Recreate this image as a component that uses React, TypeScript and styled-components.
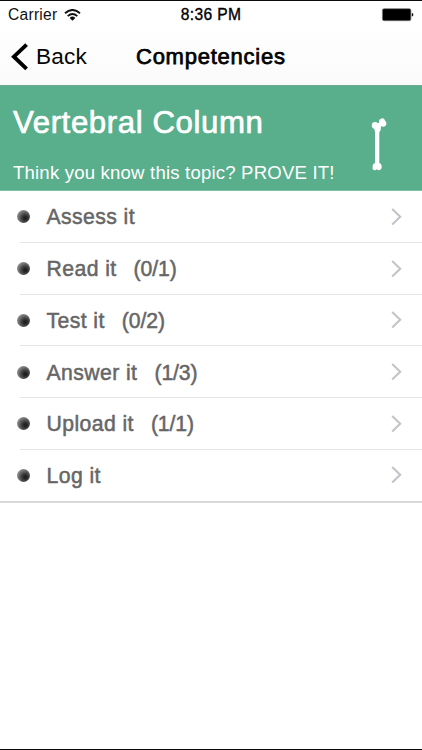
import React from "react";
import styled, { createGlobalStyle } from "styled-components";

const GlobalStyle = createGlobalStyle`
  * { box-sizing: border-box; }
  body { margin: 0; background: #fff; font-family: "Liberation Sans", Arial, sans-serif; }
`;

const Screen = styled.div`
  width: 422px;
  height: 750px;
  display: flex;
  flex-direction: column;
  overflow: hidden;
  background: #fff;
  border-top: 1px solid #0c0a0c;
  border-bottom: 1px solid #0c0a0c;
`;

const Header = styled.header`
  height: 84px;
  flex: none;
  background: linear-gradient(#fff 30%, #fafafa);
`;

const StatusBar = styled.div`
  height: 28px;
  display: grid;
  grid-template-columns: 1fr auto 1fr;
  align-items: center;
  padding: 0 8px;
  color: #111;
  font-size: 15.6px;
  line-height: 28px;
`;

const Carrier = styled.div`
  display: flex;
  align-items: center;
  gap: 7px;
  letter-spacing: 0.25px;
`;

const Clock = styled.div`
  color: #000;
  letter-spacing: 0.35px;
  -webkit-text-stroke: 0.35px #000;
`;

const Battery = styled.svg`
  justify-self: end;
`;

const NavBar = styled.div`
  height: 56px;
  display: grid;
  grid-template-columns: 136px 1fr;
  align-items: center;
  color: #050505;
`;

const BackButton = styled.div`
  display: flex;
  align-items: center;
  gap: 7px;
  padding-left: 11px;
  font-size: 22.6px;
  line-height: 28px;
  letter-spacing: 0.15px;
`;

const NavTitle = styled.h1`
  margin: 0;
  font-size: 22px;
  font-weight: 400;
  line-height: 28px;
  letter-spacing: 0.75px;
  -webkit-text-stroke: 0.75px #000;
`;

const Banner = styled.section`
  height: 106px;
  flex: none;
  display: flex;
  justify-content: space-between;
  padding: 0 34px 0 13px;
  background: #59ae8c;
  border-top: 1px solid #70a892;
  border-bottom: 1px solid #7dbfa4;
  color: #fff;
`;

const BannerText = styled.div`
  padding-top: 17px;
  white-space: nowrap;
`;

const Topic = styled.h2`
  margin: 0;
  font-size: 31.2px;
  font-weight: 400;
  line-height: 40px;
  letter-spacing: 0.6px;
  -webkit-text-stroke: 0.7px #fff;
`;

const Tagline = styled.p`
  margin: 18px 0 0;
  font-size: 18.6px;
  line-height: 24px;
  letter-spacing: 0.18px;
`;

const Bone = styled.svg`
  margin-top: 32px;
`;

const List = styled.ul`
  margin: 0;
  padding: 0;
  list-style: none;
  border-bottom: 2px solid #d9d9d9;
`;

const Row = styled.li`
  height: 51.75px;
  display: flex;
  align-items: center;
  padding: 0 20px 0 17px;

  &:not(:last-child) {
    background: linear-gradient(#e6e6e6, #e6e6e6) 20px 100% / 402px 1px no-repeat;
  }

  &:last-child {
    height: 51px;
  }
`;

const Bullet = styled.span`
  flex: none;
  width: 13px;
  height: 13px;
  border-radius: 50%;
  margin-right: 16.5px;
  background: radial-gradient(circle 10px at 64% 62%, #202020 0 12%, #484848 42%, #777 70%, #aaa 100%);
`;

const Label = styled.span`
  flex: 1;
  display: flex;
  gap: 17px;
  padding-top: 1.2px;
  color: #666;
  font-size: 21.2px;
  line-height: 28px;
  white-space: nowrap;
  -webkit-text-stroke: 0.5px #666;
`;

const Name = styled.span`
  letter-spacing: 0.42px;
`;

const Progress = styled.span`
  letter-spacing: -0.1px;
`;

const items = [
  { name: "Assess it" },
  { name: "Read it", progress: "(0/1)" },
  { name: "Test it", progress: "(0/2)" },
  { name: "Answer it", progress: "(1/3)" },
  { name: "Upload it", progress: "(1/1)" },
  { name: "Log it" },
];

export default function App() {
  return (
    <Screen>
      <GlobalStyle />
      <Header>
        <StatusBar>
          <Carrier>
            Carrier
            <svg width="17" height="13" viewBox="0 0 17 13" fill="none" stroke="#111" strokeWidth="1.9">
              <path d="M1 4.2Q8.5-2.3 16 4.2M3.7 7.1Q8.5 2.8 13.3 7.1" />
              <path d="M5.6 8.9Q8.5 6.3 11.4 8.9L8.5 11.8Z" fill="#111" stroke="none" />
            </svg>
          </Carrier>
          <Clock>8:36 PM</Clock>
          <Battery width="33" height="14" viewBox="0 0 33 14">
            <rect x="1.4" y="0.7" width="28.5" height="12" rx="1.6" fill="#000" stroke="#777" strokeWidth="0.7" />
            <path d="M30.8 5Q32.4 5.3 32.4 6.8T30.8 8.6Z" fill="#111" />
          </Battery>
        </StatusBar>
        <NavBar>
          <BackButton>
            <svg width="18" height="28" viewBox="0 0 18 28" fill="none" stroke="#000" strokeWidth="3.9">
              <path d="M15.6 1.6L2.9 13.7L15.6 25.8" />
            </svg>
            Back
          </BackButton>
          <NavTitle>Competencies</NavTitle>
        </NavBar>
      </Header>
      <Banner>
        <BannerText>
          <Topic>Vertebral Column</Topic>
          <Tagline>Think you know this topic? PROVE IT!</Tagline>
        </BannerText>
        <Bone width="17" height="54" viewBox="0 0 17 54" fill="#fff">
          <path d="M.8 7Q1 3.8 4.2 3.9Q6 3.9 6.8 5.3L8.2 4.6Q7.4 1.2 10.4.4Q13.2-.3 14 2.6Q16.6 5.4 14.4 8Q11.8 9.3 10 8L9.6 12.2L8.3 14.2V45Q10.9 45.4 10.6 48.6Q11.2 52 8.1 52.2Q6.5 52.2 5.9 51Q4.7 53 2.6 51.9Q1 51.2 1.7 49Q1.2 45.6 4 45V14.2L3.3 10.8Q.7 10.4 .8 7Z" />
        </Bone>
      </Banner>
      <List>
        {items.map(({ name, progress }) => (
          <Row key={name}>
            <Bullet />
            <Label>
              <Name>{name}</Name>
              {progress && <Progress>{progress}</Progress>}
            </Label>
            <svg width="12" height="18" viewBox="0 0 12 18" fill="none" stroke="#c3c3c8" strokeWidth="2.1">
              <path d="M2.2 1L10.2 8.7L2.2 16.4" />
            </svg>
          </Row>
        ))}
      </List>
    </Screen>
  );
}
